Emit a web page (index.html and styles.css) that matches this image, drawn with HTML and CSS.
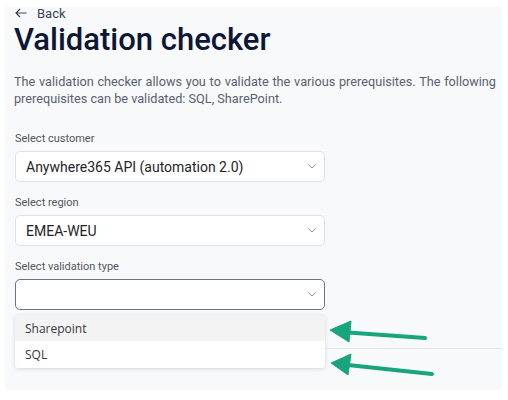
FILE: index.html
```html
<!DOCTYPE html>
<html>
<head>
<meta charset="utf-8">
<link rel="stylesheet" href="styles.css">
</head>
<body>
<div class="panel">
  <a class="back">
    <svg class="back-icon" width="12" height="10" viewBox="0 0 12 10"><path d="M11.5 5H1M5 1L1 5l4 4" fill="none" stroke="#3b4456" stroke-width="1.2"/></svg>
    <span>Back</span>
  </a>
  <h1 class="title">Validation checker</h1>
  <p class="desc">The validation checker allows you to validate the various prerequisites. The following prerequisites can be validated: SQL, SharePoint.</p>

  <div class="field">
    <label class="label">Select customer</label>
    <div class="select"><span>Anywhere365 API (automation 2.0)</span><svg class="chev" width="8" height="5" viewBox="0 0 8 5"><path d="M0.5 0.5L4 4l3.5-3.5" fill="none" stroke="#8a909b" stroke-width="1"/></svg></div>
  </div>
  <div class="field">
    <label class="label">Select region</label>
    <div class="select"><span>EMEA-WEU</span><svg class="chev" width="8" height="5" viewBox="0 0 8 5"><path d="M0.5 0.5L4 4l3.5-3.5" fill="none" stroke="#8a909b" stroke-width="1"/></svg></div>
  </div>
  <div class="field last">
    <label class="label">Select validation type</label>
    <div class="select focused"><span></span><svg class="chev" width="8" height="5" viewBox="0 0 8 5"><path d="M0.5 0.5L4 4l3.5-3.5" fill="none" stroke="#8a909b" stroke-width="1"/></svg></div>
    <div class="row-under">
      <ul class="menu">
        <li class="item hover">Sharepoint</li>
        <li class="item">SQL</li>
      </ul>
      <div class="rule"></div>
    </div>
  </div>

  <svg class="arrows" width="508" height="400" viewBox="0 0 508 400">
    <g fill="#19a57c" stroke="#19a57c">
      <path d="M348 332.5L425 338" stroke-width="4" stroke-linecap="round" fill="none"/>
      <path d="M330 330L351 321L349 342Z" stroke-width="1" stroke-linejoin="round"/>
      <path d="M348 365L432 374" stroke-width="4" stroke-linecap="round" fill="none"/>
      <path d="M331 363L351 354L348 375Z" stroke-width="1" stroke-linejoin="round"/>
    </g>
  </svg>
</div>
</body>
</html>
```

FILE: styles.css
```css
* { box-sizing: border-box; }
html, body { margin: 0; padding: 0; background: #ffffff; }
body { width: 508px; height: 400px; position: relative; overflow: hidden; }

.panel {
  margin: 7px 0 0 5px;
  width: 497px;
  height: 383px;
  background: #f8f9fb;
  padding: 0 6px 0 9px;
  font-family: Roboto, "Liberation Sans", sans-serif;
  overflow: hidden;
}

.back {
  display: flex;
  align-items: center;
  gap: 10px;
  height: 12px;
  margin-top: 0;
  font-size: 13px;
  color: #3b4456;
}
.back-icon { display: block; margin-left: 1px; }

.title {
  margin: 2px 0 0 0;
  font-size: 31px;
  font-weight: 500;
  color: #0d1634;
  line-height: 38px;
  letter-spacing: 0;
}

.desc {
  margin: 14px 0 0 0;
  font-size: 12.7px;
  line-height: 17px;
  color: #59616d;
  text-align: justify;
}

.field { margin-top: 25px; width: 311px; }
.field + .field { margin-top: 14px; }

.label {
  display: block;
  font-size: 11px;
  line-height: 13px;
  color: #50575f;
  margin: 0 0 6px 1px;
}

.select {
  height: 31px;
  margin-left: 1px;
  width: 310px;
  background: #ffffff;
  border: 1px solid #dde1e7;
  border-radius: 5px;
  display: flex;
  align-items: center;
  justify-content: space-between;
  padding: 0 8px 0 10px;
  font-size: 14px;
  color: #1f2329;
}
.select.focused { border-color: #6c7381; }
.chev { display: block; }

.row-under { display: flex; align-items: flex-start; margin-top: 5px; width: 497px; margin-left: -9px; padding-left: 10px; }

.menu {
  list-style: none;
  margin: 0;
  padding: 0;
  width: 310px;
  background: #ffffff;
  border-radius: 3px;
  box-shadow: 0 1px 4px rgba(0,0,0,0.14);
  font-family: "Open Sans", sans-serif;
  font-size: 12px;
  color: #333840;
  flex: none;
}
.item { height: 27px; display: flex; align-items: center; padding-left: 10px; }
.item.hover { background: #f3f3f3; height: 26px; }

.rule { flex: 1; height: 1px; background: #dfe3ea; margin-top: 33px; }

.arrows { position: absolute; left: 0; top: 0; pointer-events: none; }
```
